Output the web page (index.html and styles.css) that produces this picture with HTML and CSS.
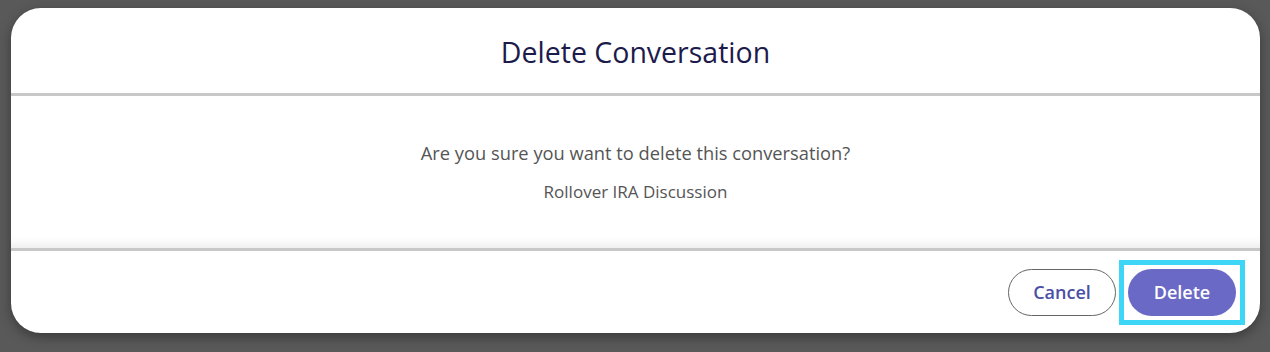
FILE: index.html
```html
<!DOCTYPE html>
<html>
<head>
    <title>Delete Conversation</title>
    <link rel="stylesheet" href="styles.css">
</head>
<body>
    <div class="modal">
        <div class="modal-header">
            <h2 class="modal-title">Delete Conversation</h2>
        </div>

        <div class="modal-body">
            <p class="question">Are you sure you want to delete this conversation?</p>
            <p class="conv-name">Rollover IRA Discussion</p>
        </div>

        <div class="modal-footer">
            <button class="btn btn-cancel">Cancel</button>
            <span class="focus-ring">
                <button class="btn btn-delete">Delete</button>
            </span>
        </div>
    </div>
</body>
</html>
```

FILE: styles.css
```css
/* ダイアログ */
body {
    margin: 0;
    background-color: #595959;
    padding: 8px 10px 19px 11px;
    font-family: "Open Sans", "Noto Sans", sans-serif;
}

.modal {
    background-color: #fff;
    border-radius: 30px;
    height: 325px;
    display: flex;
    flex-direction: column;
    overflow: hidden;
    box-shadow: 0 4px 12px rgba(0, 0, 0, 0.35);
}

.modal-header {
    height: 85px;
    display: flex;
    align-items: center;
    justify-content: center;
    border-bottom: 3px solid #c8c8c8;
}

.modal-title {
    margin: 0;
    font-size: 28.5px;
    font-weight: 400;
    color: #1c1b4b;
    padding-top: 2px;
}

.modal-body {
    height: 152px;
    text-align: center;
    color: #555;
    box-shadow: inset 0 -12px 10px -8px rgba(0, 0, 0, 0.08);
}

.question {
    margin: 45px 0 0;
    font-size: 18.3px;
    line-height: 24px;
}

.conv-name {
    margin: 16px 0 0;
    font-size: 17px;
    line-height: 22px;
}

.modal-footer {
    flex: 1;
    border-top: 3px solid #c8c8c8;
    display: flex;
    align-items: center;
    justify-content: flex-end;
    gap: 3px;
    padding-right: 15px;
}

.btn {
    height: 47px;
    width: 108px;
    border-radius: 24px;
    font-family: inherit;
    font-size: 18px;
    font-weight: 600;
    cursor: pointer;
}

.btn-cancel {
    background-color: #fff;
    border: 1px solid #666;
    color: #4b4fa6;
}

/* フォーカス枠 */
.focus-ring {
    display: flex;
    border: 5px solid #3ed6f6;
    padding: 4px;
}

.btn-delete {
    background-color: #6a69c5;
    border: none;
    color: #fff;
}
```
